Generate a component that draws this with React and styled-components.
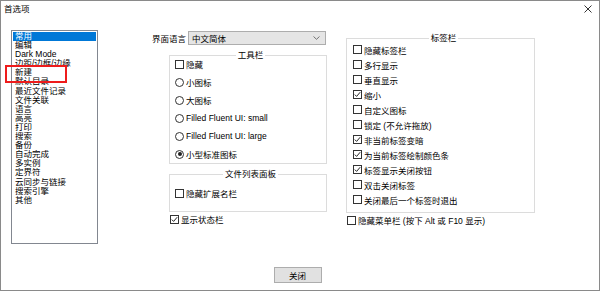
import styled, { createGlobalStyle } from 'styled-components';

const GlobalStyle = createGlobalStyle`
  html, body { margin: 0; padding: 0; background: #fff; }
  body {
    font-family: "Liberation Sans", "Noto Sans CJK SC", sans-serif;
    font-size: 8.5px;
    color: #000;
  }
`;

const Window = styled.div`
  position: relative;
  width: 600px;
  height: 291px;
  box-sizing: border-box;
  border: 1px solid #8a8a8a;
  background: #fff;
  display: flex;
  flex-direction: column;
  overflow: hidden;
`;

const TitleBar = styled.div`
  height: 16px;
  display: flex;
  align-items: center;
  justify-content: space-between;
  padding: 0 7px 0 3px;
`;

const Title = styled.span`
  line-height: 10px;
`;

const Body = styled.div`
  flex: 1;
  display: flex;
  align-items: flex-start;
  padding: 13px 0 0 10px;
`;

const ListBox = styled.div`
  width: 87px;
  height: 214px;
  box-sizing: border-box;
  border: 1px solid #828790;
  padding: 1px;
`;

const ListItem = styled.div`
  height: 9.1px;
  line-height: 9.1px;
  padding-left: 2px;
  white-space: nowrap;
  overflow: hidden;
  background: ${p => (p.$selected ? '#0078d7' : 'transparent')};
  color: ${p => (p.$selected ? '#fff' : '#000')};
`;

const MiddleColumn = styled.div`
  width: 175px;
  margin-left: 55px;
  display: flex;
  flex-direction: column;
`;

const RightColumn = styled.div`
  width: 189px;
  margin-left: 18px;
  display: flex;
  flex-direction: column;
`;

const LangRow = styled.div`
  margin-top: 1px;
  height: 14px;
  display: flex;
  align-items: center;
  justify-content: flex-end;
  gap: 2px;
  padding-right: 2px;
  white-space: nowrap;
`;

const Select = styled.div`
  width: 138px;
  height: 14px;
  box-sizing: border-box;
  border: 1px solid #adadad;
  background: #e5e5e5;
  display: flex;
  align-items: center;
  justify-content: space-between;
  padding: 0 5px 0 3px;
  flex: none;
`;

const Group = styled.fieldset`
  margin: ${p => p.$top}px 0 0 ${p => p.$left || 0}px;
  width: ${p => p.$width}px;
  box-sizing: border-box;
  border: 1px solid #dcdcdc;
  padding: ${p => p.$pad || '0 0 0 5px'};
  min-inline-size: 0;
`;

const Legend = styled.legend`
  margin: 0 auto -5px;
  padding: 0 2px;
  line-height: 10px;
`;

const Row = styled.label`
  display: flex;
  align-items: center;
  gap: 2px;
  height: ${p => p.$h || 15}px;
  margin-left: ${p => p.$indent || 0}px;
  white-space: nowrap;
`;

const Box = styled.span`
  width: 9px;
  height: 9px;
  box-sizing: border-box;
  border: 1px solid #333;
  background: #fff;
  display: inline-flex;
  align-items: center;
  justify-content: center;
  flex: none;
`;

const Radio = styled.span`
  position: relative;
  width: 9px;
  height: 9px;
  box-sizing: border-box;
  border: 1px solid #333;
  border-radius: 50%;
  background: #fff;
  flex: none;
  &::after {
    content: '';
    position: absolute;
    inset: 1.5px;
    border-radius: 50%;
    background: ${p => (p.$on ? '#222' : 'transparent')};
  }
`;

const Footer = styled.div`
  display: flex;
  justify-content: center;
  padding: 0 5px 7px 0;
`;

const Button = styled.div`
  width: 48px;
  height: 16px;
  box-sizing: border-box;
  border: 1px solid #adadad;
  background: #e1e1e1;
  display: flex;
  align-items: center;
  justify-content: center;
`;

const Marker = styled.div`
  position: absolute;
  left: 4px;
  top: 64px;
  width: 62px;
  height: 18px;
  box-sizing: border-box;
  border: 2px solid #ee1c1c;
  pointer-events: none;
`;

function Check({ checked, label, h, indent }) {
  return (
    <Row $h={h} $indent={indent}>
      <Box>
        {checked && (
          <svg width="7" height="7" viewBox="0 0 7 7">
            <polyline points="0.8,3.6 2.6,5.4 6.2,1.2" fill="none" stroke="#222" strokeWidth="1" />
          </svg>
        )}
      </Box>
      {label}
    </Row>
  );
}

function Option({ on, label }) {
  return (
    <Row $h={18}>
      <Radio $on={on} />
      {label}
    </Row>
  );
}

const pages = [
  '常用', '编辑', 'Dark Mode', '边距/边框/边缘', '新建', '默认目录', '最近文件记录',
  '文件关联', '语言', '高亮', '打印', '搜索', '备份', '自动完成', '多实例',
  '定界符', '云同步与链接', '搜索引擎', '其他',
];

const tabOptions = [
  ['隐藏标签栏', false],
  ['多行显示', false],
  ['垂直显示', false],
  ['缩小', true],
  ['自定义图标', false],
  ['锁定 (不允许拖放)', false],
  ['非当前标签变暗', true],
  ['为当前标签绘制颜色条', true],
  ['标签显示关闭按钮', true],
  ['双击关闭标签', false],
  ['关闭最后一个标签时退出', false],
];

export default function App() {
  return (
    <>
      <GlobalStyle />
      <Window>
        <TitleBar>
          <Title>首选项</Title>
          <svg width="8" height="8" viewBox="0 0 8 8">
            <path d="M0.5 0.5 L7.5 7.5 M7.5 0.5 L0.5 7.5" stroke="#333" strokeWidth="1" />
          </svg>
        </TitleBar>
        <Body>
          <ListBox>
            {pages.map((p, i) => (
              <ListItem key={p} $selected={i === 0}>{p}</ListItem>
            ))}
          </ListBox>

          <MiddleColumn>
            <LangRow>
              <span>界面语言</span>
              <Select>
                <span>中文简体</span>
                <svg width="7" height="4" viewBox="0 0 7 4">
                  <polyline points="0.5,0.5 3.5,3.3 6.5,0.5" fill="none" stroke="#666" strokeWidth="0.9" />
                </svg>
              </Select>
            </LangRow>

            <Group $top={5} $left={16} $width={158}>
              <Legend>工具栏</Legend>
              <Check h={18} label="隐藏" />
              <Option label="小图标" />
              <Option label="大图标" />
              <Option label="Filled Fluent UI: small" />
              <Option label="Filled Fluent UI: large" />
              <Option on label="小型标准图标" />
            </Group>

            <Group $top={5} $left={16} $width={158} $pad="12px 0 11px 5px">
              <Legend>文件列表面板</Legend>
              <Check h={14} label="隐藏扩展名栏" />
            </Group>

            <Check checked h={14} indent={17} label="显示状态栏" />
          </MiddleColumn>

          <RightColumn>
            <Group $top={3} $width={189} $pad="4px 0 5px 6px">
              <Legend>标签栏</Legend>
              {tabOptions.map(([label, checked]) => (
                <Check key={label} checked={checked} label={label} />
              ))}
            </Group>
            <Check h={14} indent={1} label="隐藏菜单栏 (按下 Alt 或 F10 显示)" />
          </RightColumn>
        </Body>
        <Footer>
          <Button>关闭</Button>
        </Footer>
        <Marker />
      </Window>
    </>
  );
}
